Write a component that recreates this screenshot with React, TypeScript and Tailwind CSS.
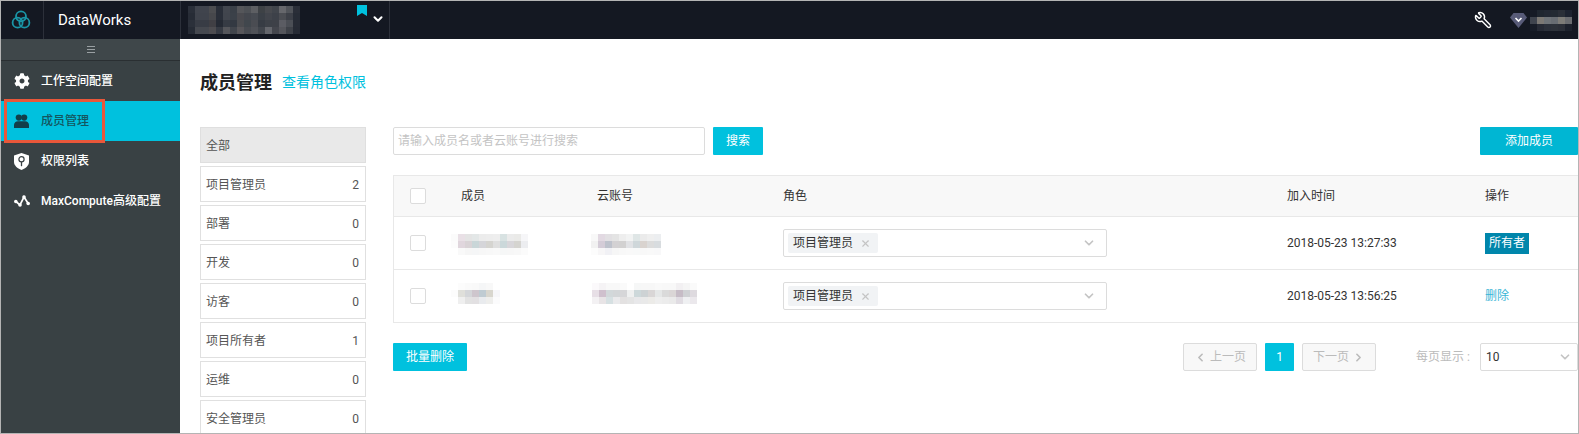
import { FaCog } from 'react-icons/fa'
import { ChevronDown, ChevronLeft, ChevronRight, Wrench, X } from 'lucide-react'

// pixelated regions of the screenshot, one string per row
const PROJECT = [
  '#2a2f39 #40444d #40444d #4c4d50 #2a2f39 #42464e #3a4048 #55565a #4e5156 #5d5f63 #3e4246 #484a4f #41454c #66676c #51545a #2a2e38',
  '#272c36 #3f434c #3f434c #47484c #2a2f39 #41454d #3b4149 #4a4a4f #44474e #474b52 #3b4047 #42454c #3d4149 #4b4d53 #3d4048 #272c36',
  '#2b303a #383c45 #383c45 #403f44 #252a34 #363b44 #333942 #4b4c50 #41474d #4a4c52 #373c44 #3d4148 #3e4148 #5b5c63 #4b4e55 #272b35',
  '#262b35 #45484f #45484f #4d4c50 #363a43 #55565b #41454c #57565a #484b51 #4f5157 #41454c #64666c #44464d #54555b #3e4148 #262a34',
]
const USER = [
  '#161b26 #1f2630 #222833 #232a33 #2a2f38 #1d2330',
  '#3f444e #7b7874 #6e7378 #686d73 #7d7c78 #6a6c70',
  '#171c27 #262a35 #2b303a #2d323a #2b2f38 #1c212c',
]
const MEMBER1 = [
  '#fbfbfb #e9e0e6 #e4e4e4 #e3e7e7 #ececec #ededed #eeeeee #d8e2e2 #ebebeb #eaeae8 #f6f6f8',
  '#fcfcfc #e0d6dd #d9d3d6 #c9d6d8 #d5d5d9 #d5d4d0 #dfdfdf #cbd8da #d8d6da #d5d4d0 #ecedf0',
  '#ffffff #f9f9f9 #f6f6f6 #f5f6f7 #f7f7f7 #f8f8f8 #f9f9f9 #f6f7f7 #f7f7f7 #f8f8f8 #fbfbfb',
]
const ACCOUNT1 = [
  '#f8f8f8 #e2d9e2 #e2e0e3 #e4e4e4 #eeeeee #f2f3f3 #dfe6e6 #ebebeb #efefef #eceef0',
  '#f1f1f1 #d4ccd7 #bec2cc #d3d1d3 #d2d1d1 #e1e2e5 #cfd7da #d9d3cf #dcdcdc #d8dcdf',
  '#fcfcfc #f7f6f7 #f1f1f5 #f6f6f6 #f8f8f8 #f9f9f9 #f8f9f9 #f8f8f8 #f9f9f9 #f8f8f9',
]
const MEMBER2 = [
  '#ffffff #fcfcfc #fafafa #f9f9f9 #f5f6f7 #f8f8f8 #ffffff',
  '#fcfcfc #dfdfda #d4d6d9 #cec6cd #bfcbd2 #d8d6ce #f6f6f9',
  '#ffffff #efefef #e2e2e2 #e2e0e2 #e9ebee #eeeeec #fbfbfc',
]
const ACCOUNT2 = [
  '#fbf9fb #f5f3f5 #f8f8f8 #f8f8f8 #fafafa #ffffff #f6f7f7 #f7f7f7 #f7f7f7 #f9f9f9 #f8f8f8 #f8f8f8 #f2f0f2 #f5f5f5 #fafafa',
  '#e7dfe6 #cfc0cd #d2d8da #d3d6d8 #d6d6d8 #eff0f0 #cdd8da #cdd2d4 #d9d6d6 #e5e7e7 #dadada #dad6d6 #c6bcc6 #cfd1d4 #dedadf',
  '#f3f1f3 #e8e4e6 #d6e0e2 #eaeaec #e3e1e1 #e4e4e4 #e8e8ea #e9e9e9 #ecebe8 #eeeeee #ececec #eaeaea #e0dce2 #eff0f2 #ebe8ec',
]

function Mosaic({ rows, className }: { rows: string[]; className?: string }) {
  const cells = rows.map((r) => r.split(' '))
  return (
    <svg className={className} width={cells[0].length * 7} height={cells.length * 7} shapeRendering="crispEdges">
      {cells.map((row, y) =>
        row.map((c, x) => <rect key={`${x}-${y}`} x={x * 7} y={y * 7} width="7" height="7" fill={c} />),
      )}
    </svg>
  )
}

const GROUPS = [
  { name: '项目管理员', count: 2 },
  { name: '部署', count: 0 },
  { name: '开发', count: 0 },
  { name: '访客', count: 0 },
  { name: '项目所有者', count: 1 },
  { name: '运维', count: 0 },
  { name: '安全管理员', count: 0 },
]

function Logo() {
  return (
    <svg width="20" height="20" viewBox="0 0 20 20" fill="none" stroke="#1a95a6" strokeWidth="1.800">
      <circle cx="10" cy="6.300" r="5" />
      <circle cx="6.600" cy="12.700" r="5" />
      <circle cx="13.400" cy="12.700" r="5" />
    </svg>
  )
}

function UsersIcon() {
  return (
    <svg width="15" height="14" viewBox="0 0 15 14" fill="#123f49">
      <circle cx="4.800" cy="3.600" r="3.100" />
      <circle cx="10.200" cy="3.600" r="3.100" />
      <path d="M0 14v-3c0-2.200 1.800-3.700 4-3.700h7c2.200 0 4 1.500 4 3.700v3z" />
    </svg>
  )
}

function ShieldIcon() {
  return (
    <svg width="15" height="17" viewBox="0 0 15 17">
      <path fill="#fff" d="M7.500 0 15 2.600v6.200c0 3.800-3.200 6.600-7.500 8.200C3.200 15.400 0 12.600 0 8.800V2.600z" />
      <circle cx="7.500" cy="6.200" r="2.600" fill="none" stroke="#394144" strokeWidth="1.200" />
      <path stroke="#394144" strokeWidth="1.300" d="M7.500 8.800v4.400" />
    </svg>
  )
}

function TrendIcon() {
  return (
    <svg width="16" height="12" viewBox="0 0 16 12">
      <path fill="none" stroke="#fff" strokeWidth="1.700" d="M1.800 6.500 6 10 10 2 14.200 8.500" />
      <circle cx="1.800" cy="6.500" r="1.800" fill="#fff" />
      <circle cx="6" cy="10" r="1.800" fill="#fff" />
      <circle cx="10" cy="2" r="1.800" fill="#fff" />
      <circle cx="14.200" cy="8.500" r="1.800" fill="#fff" />
    </svg>
  )
}

function DiamondIcon() {
  return (
    <svg width="17" height="15" viewBox="0 0 17 15">
      <path fill="#585b78" d="M3.500 0h10L17 4.500 8.500 15 0 4.500z" />
      <path fill="none" stroke="#fff" strokeWidth="1.600" d="m5.500 5 3 3 3-3" />
    </svg>
  )
}

function NavItem({ icon, label, active }: { icon: React.ReactNode; label: string; active?: boolean }) {
  return (
    <div className={`flex h-[40px] items-center ${active ? 'bg-[#00c1de] text-[#14565f]' : 'text-white'}`}>
      <div className="flex w-[40px] justify-center pl-[1px]">{icon}</div>
      <span className="text-[12px] font-medium">{label}</span>
    </div>
  )
}

function Check() {
  return <div className="h-[16px] w-[16px] rounded-[2px] border border-[#dcdcdc] bg-white" />
}

function RoleSelect() {
  return (
    <div className="flex h-[28px] w-[324px] items-center justify-between rounded-[2px] border border-[#dcdcdc] bg-white pl-[4px] pr-[10px]">
      <div className="flex h-[20px] w-[90px] items-center rounded-[2px] bg-[#f1f3f5] pl-[5px]">
        <span className="text-[12px] text-[#333]">项目管理员</span>
        <X className="ml-[7px] text-[#c4c4c4]" size={11} strokeWidth={2.5} />
      </div>
      <ChevronDown className="text-[#c4c4c4]" size={14} strokeWidth={3} />
    </div>
  )
}

const COLS = 'grid grid-cols-[67px_136px_186px_504px_198px_1fr] items-center border-b border-[#e8e8e8]'

export default function App() {
  return (
    <div className="h-[434px] w-[1579px] overflow-hidden border border-[#b4b4b4] font-['Roboto','Noto_Sans_CJK_SC',sans-serif] text-[12px] text-[#333]">
      {/* top bar */}
      <header className="flex h-[38px] items-stretch bg-[#141822]">
        <div className="flex w-[43px] items-center justify-center border-r border-[#2c303a] pr-[2px]">
          <Logo />
        </div>
        <div className="flex w-[137px] items-center border-r border-[#2c303a] pl-[14px] text-[15px] text-white">DataWorks</div>
        <div className="flex w-[209px] border-r border-[#2c303a] pl-[7px]">
          <Mosaic rows={PROJECT} className="mt-[5px]" />
          <svg className="ml-[57px] mt-[4px]" width="10" height="11" viewBox="0 0 10 11">
            <path fill="#00c1de" d="M0 0h10v11L5 8 0 11z" />
          </svg>
          <ChevronDown className="ml-[4px] mt-[11px] text-white" size={14} strokeWidth={3.5} />
        </div>
        <div className="ml-auto flex items-center pr-[6px]">
          <Wrench className="-scale-x-100 text-white" size={18} strokeWidth={1.9} />
          <div className="ml-[18px]">
            <DiamondIcon />
          </div>
          <Mosaic rows={USER} className="ml-[3px]" />
        </div>
      </header>

      <div className="flex h-[394px]">
        {/* sidebar */}
        <aside className="relative w-[179px] shrink-0 bg-[#394144]">
          <div className="flex h-[22px] items-center justify-center border-b border-[#2a2f32] bg-[#3f474a]">
            <svg width="8" height="7" viewBox="0 0 8 7" stroke="#9aa0a3">
              <path d="M0 .5h8M0 3.500h8M0 6.500h8" />
            </svg>
          </div>
          <NavItem icon={<FaCog size={16} />} label="工作空间配置" />
          <NavItem icon={<UsersIcon />} label="成员管理" active />
          <NavItem icon={<ShieldIcon />} label="权限列表" />
          <NavItem icon={<TrendIcon />} label="MaxCompute高级配置" />
          <div className="absolute left-[3px] top-[60px] h-[44px] w-[101px] border-[3px] border-[#e9573a]" />
        </aside>

        {/* main */}
        <main className="min-w-0 flex-1 pl-[20px]">
          <div className="flex h-[88px] items-center pb-[1px]">
            <h1 className="text-[18px] font-bold text-[#222]">成员管理</h1>
            <a className="ml-[10px] text-[14px] text-[#00c1de]">查看角色权限</a>
          </div>

          <div className="flex">
            <ul className="flex w-[166px] shrink-0 flex-col gap-[3px]">
              <li className="flex h-[36px] items-center border border-[#dfdfdf] bg-[#e9e9e9] px-[5px] pt-[2px] text-[#555]">全部</li>
              {GROUPS.map((g) => (
                <li key={g.name} className="flex h-[36px] shrink-0 items-center justify-between border border-[#e0e0e0] pl-[5px] pr-[6px] pt-[2px] text-[#555]">
                  <span>{g.name}</span>
                  <span>{g.count}</span>
                </li>
              ))}
            </ul>

            <div className="ml-[27px] min-w-0 flex-1">
              <div className="flex">
                <div className="flex h-[28px] w-[312px] items-center rounded-[2px] border border-[#dcdcdc] pl-[4px] text-[#c4c4c4]">请输入成员名或者云账号进行搜索</div>
                <button className="ml-[8px] h-[28px] w-[50px] rounded-[1px] bg-[#00c1de] text-white">搜索</button>
                <button className="ml-auto h-[28px] w-[98px] rounded-[1px] bg-[#00b6d3] text-white">添加成员</button>
              </div>

              <div className="mt-[20px] border-l border-t border-[#e8e8e8]">
                <div className={`${COLS} h-[41px] bg-[#f8f8f8]`}>
                  <div className="pl-[16px]"><Check /></div>
                  <span>成员</span>
                  <span>云账号</span>
                  <span>角色</span>
                  <span>加入时间</span>
                  <span>操作</span>
                </div>
                <div className={`${COLS} h-[53px]`}>
                  <div className="pl-[16px]"><Check /></div>
                  <Mosaic rows={MEMBER1} className="-ml-[10px] mt-[3px]" />
                  <Mosaic rows={ACCOUNT1} className="-ml-[6px] mt-[3px]" />
                  <RoleSelect />
                  <span>2018-05-23 13:27:33</span>
                  <span className="flex h-[21px] w-[44px] items-center justify-center bg-[#0086ab] text-white">所有者</span>
                </div>
                <div className={`${COLS} h-[53px]`}>
                  <div className="pl-[16px]"><Check /></div>
                  <Mosaic rows={MEMBER2} className="-ml-[10px] -mt-[5px]" />
                  <Mosaic rows={ACCOUNT2} className="-ml-[5px] -mt-[5px]" />
                  <RoleSelect />
                  <span>2018-05-23 13:56:25</span>
                  <a className="text-[#39b5d6]">删除</a>
                </div>
              </div>

              <div className="mt-[20px] flex items-center">
                <button className="h-[28px] w-[74px] rounded-[1px] bg-[#00c1de] text-white">批量删除</button>
                <div className="ml-auto flex items-center">
                  <button className="flex h-[28px] w-[74px] items-center justify-center gap-[3px] rounded-[2px] border border-[#dcdcdc] bg-[#f8f8f8] text-[#bbb]">
                    <ChevronLeft size={13} strokeWidth={3} />
                    上一页
                  </button>
                  <button className="ml-[8px] h-[28px] w-[29px] rounded-[1px] bg-[#00c1de] text-white">1</button>
                  <button className="ml-[8px] flex h-[28px] w-[74px] items-center justify-center gap-[3px] rounded-[2px] border border-[#dcdcdc] bg-[#f8f8f8] text-[#bbb]">
                    下一页
                    <ChevronRight size={13} strokeWidth={3} />
                  </button>
                  <span className="ml-[40px] w-[64px] text-[#bbb]">每页显示 :</span>
                  <div className="flex h-[28px] w-[98px] items-center justify-between rounded-[2px] border border-[#dcdcdc] pl-[5px] pr-[5px]">
                    <span>10</span>
                    <ChevronDown className="text-[#c4c4c4]" size={14} strokeWidth={3} />
                  </div>
                </div>
              </div>
            </div>
          </div>
        </main>
      </div>
    </div>
  )
}
